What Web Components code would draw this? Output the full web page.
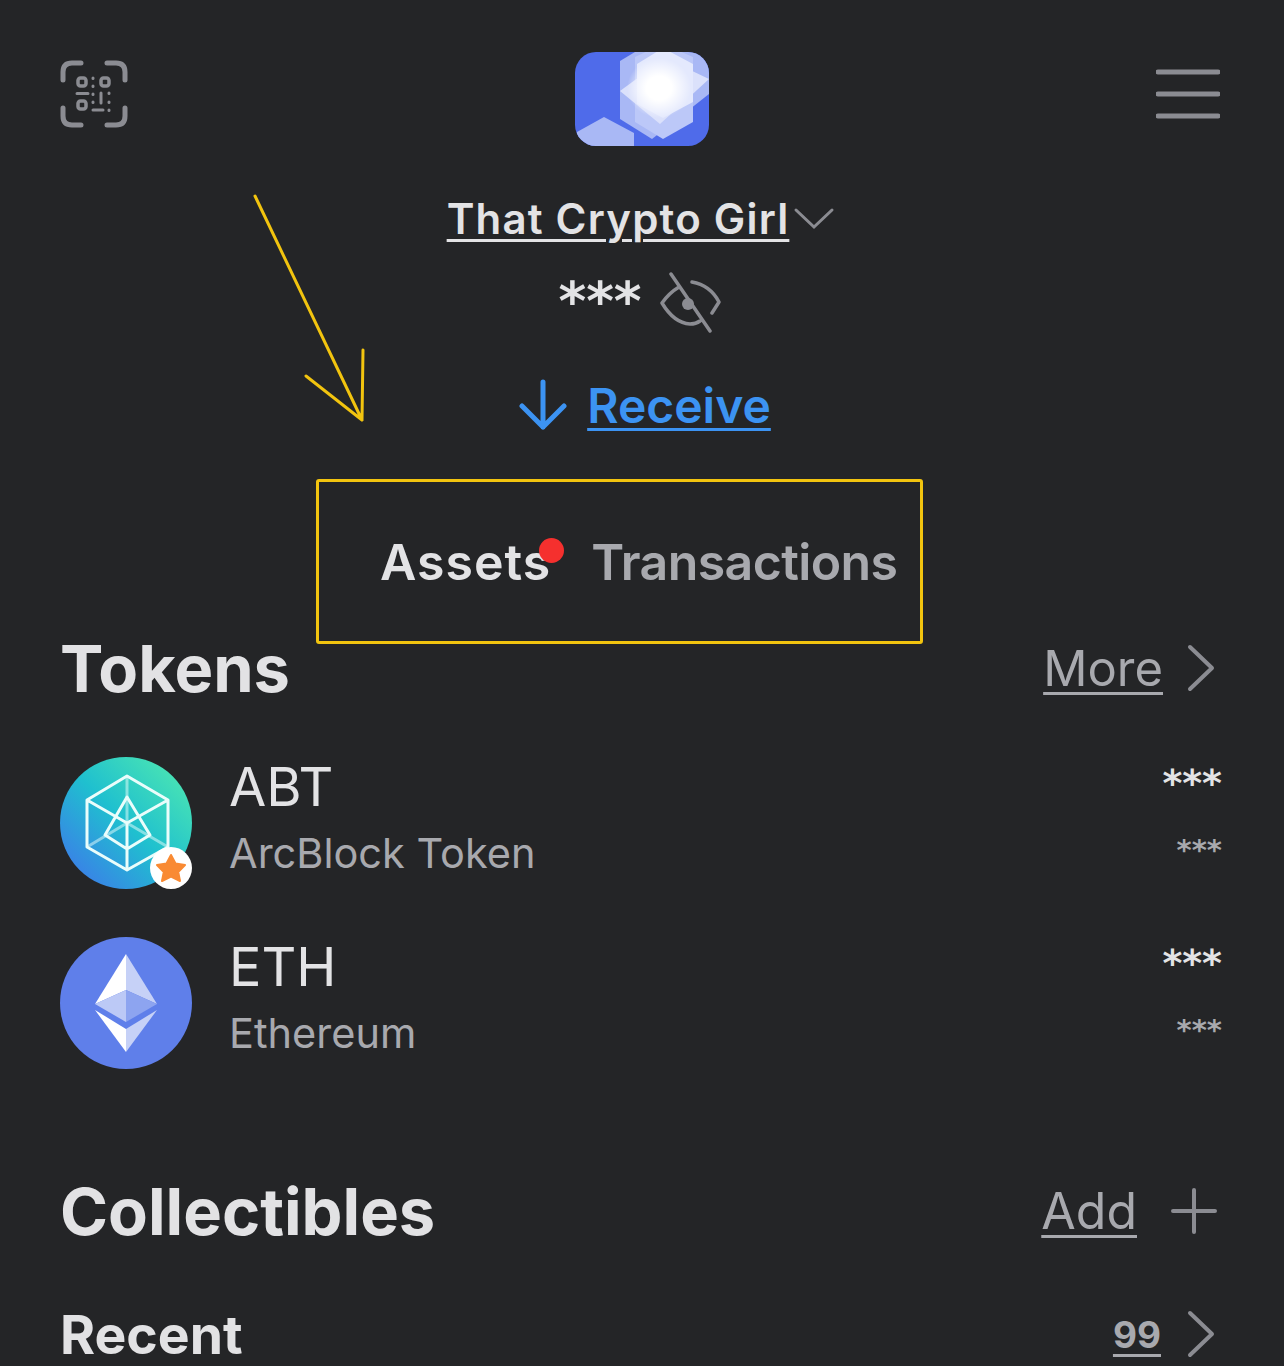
<!DOCTYPE html>
<html>
<head>
<meta charset="utf-8">
<style>
    html, body { margin: 0; padding: 0; background: #242527; }
    body { font-family: Inter, "Liberation Sans", sans-serif; height: 1366px; overflow: hidden; }
</style>
</head>
<body>
<wallet-screen>
    <top-bar></top-bar>
    <account-head name="That Crypto Girl"></account-head>
    <asset-tabs></asset-tabs>
    <section-head title="Tokens" link="More" icon="chevron" style="margin-top:-8px"></section-head>
    <token-row symbol="ABT" name="ArcBlock Token" kind="abt" style="margin-top:57px"></token-row>
    <token-row symbol="ETH" name="Ethereum" kind="eth" style="margin-top:48px"></token-row>
    <section-head title="Collectibles" link="Add" icon="plus" style="margin-top:110px"></section-head>
    <section-head title="Recent" link="99" icon="chevron" small style="margin-top:59px"></section-head>
</wallet-screen>
<script>
class WalletScreen extends HTMLElement {
    constructor() {
        super();
        this.attachShadow({ mode: 'open' });
        this.shadowRoot.innerHTML = `
            <style>
                :host { display: block; position: relative; height: 1366px; padding: 52px 60px 0; box-sizing: border-box; }
                svg { position: absolute; left: 0; top: 0; pointer-events: none; }
            </style>
            <slot></slot>
            <svg width="400" height="440" fill="none" stroke="#f2c40f" stroke-width="3" stroke-linecap="round" stroke-linejoin="round">
                <path d="M255 196L362 420M306 376L362 420L363 350"/>
            </svg>
        `;
    }
}

class TopBar extends HTMLElement {
    constructor() {
        super();
        this.attachShadow({ mode: 'open' });
        this.shadowRoot.innerHTML = `
            <style>
                :host { display: flex; justify-content: space-between; align-items: flex-start; height: 94px; margin-right: 4px; }
                svg { display: block; }
            </style>
            <svg width="68" height="68" viewBox="0 0 68 68" fill="none" stroke="#8b8c92" stroke-width="5" stroke-linecap="round" style="margin-top:8px">
                <path d="M21 3H12Q3 3 3 12V20M47 3H56Q65 3 65 12V20M3 48V56Q3 65 12 65H21M65 48V56Q65 65 56 65H47"/>
                <rect x="18" y="18" width="8" height="8" rx="2.5" stroke-width="3.5"/>
                <rect x="41" y="18" width="8" height="8" rx="2.5" stroke-width="3.5"/>
                <rect x="18" y="41" width="8" height="8" rx="2.5" stroke-width="3.5"/>
                <path stroke-width="3" d="M17 33.500H28M33 18V18.500M33 26V26.500M33 34V34.500M33 42V42.500M33 50H43M41 33V43M49 33V33.500M49 42V42.500M49 50V50.500"/>
            </svg>
            <svg width="134" height="94" viewBox="0 0 134 94">
                <defs>
                    <clipPath id="c"><rect width="134" height="94" rx="21"/></clipPath>
                    <radialGradient id="w"><stop offset="0.4" stop-color="#fff"/><stop offset="1" stop-color="#fff" stop-opacity="0"/></radialGradient>
                </defs>
                <g clip-path="url(#c)">
                    <rect width="134" height="94" fill="#4f6bea"/>
                    <path d="M2 80L29 65L59 81V94H0Z" fill="#a9b8f5"/>
                    <path d="M45 9L60 0H134V42L77 87L45 67Z" fill="#a9b8f5"/>
                    <path d="M60 5L88 -8L118 5V70L88 87L60 70Z" fill="#bcc8f8"/>
                    <path d="M45 39L90 6L134 27L85 72Z" fill="#dbe1fb"/>
                    <path d="M88 -4L118 12V50L88 66L62 52V12Z" fill="#e4e9fd"/>
                    <ellipse cx="84" cy="36" rx="32" ry="30" fill="url(#w)"/>
                </g>
            </svg>
            <svg width="64" height="50" viewBox="0 0 64 50" stroke="#8b8c92" stroke-width="5" stroke-linecap="round" style="margin-top:17px">
                <path d="M2 3H62M2 25H62M2 47H62"/>
            </svg>
        `;
    }
}

class AccountHead extends HTMLElement {
    constructor() {
        super();
        this.attachShadow({ mode: 'open' });
        const name = this.getAttribute('name');
        this.shadowRoot.innerHTML = `
            <style>
                :host { display: flex; flex-direction: column; align-items: center; color: #e3e3e5; }
                .name { display: flex; align-items: center; height: 50px; margin: 47px 0 0 -2px; }
                .name u { font-size: 42px; font-weight: 600; letter-spacing: 1.2px; text-underline-offset: 5px; text-decoration-thickness: 3px; }
                .hidden { display: flex; align-items: center; gap: 18px; height: 64px; margin: 28px 0 0 -4px; }
                .hidden b { font: 700 53px "DejaVu Sans", sans-serif; line-height: 44px; margin-top: -2px; }
                .receive { display: flex; align-items: center; gap: 20px; margin-top: 38px; color: #3c93f2; height: 64px; margin-left: 6px; }
                .receive u { font-size: 48px; font-weight: 600; text-underline-offset: 5px; text-decoration-thickness: 3px; }
                svg { display: block; }
            </style>
            <div class="name"><u>${name}</u>
                <svg width="42" height="24" viewBox="0 0 42 24" fill="none" stroke="#8b8c92" stroke-width="3" stroke-linecap="round" style="margin-left:4px">
                    <path d="M3 4L21 21L39 4"/>
                </svg>
            </div>
            <div class="hidden"><b>***</b>
                <svg width="62" height="64" viewBox="0 0 62 64" fill="none" stroke="#8b8c92" stroke-width="3.500" stroke-linecap="round" stroke-linejoin="round">
                    <path d="M11 3L50 60M32 11Q50 14 59 31L52 42M19 16Q9 22 2 32Q14 52 30 53Q36 53 40 50"/>
                    <circle cx="28" cy="33" r="6" fill="#8b8c92" stroke="none"/>
                </svg>
            </div>
            <div class="receive">
                <svg width="48" height="52" viewBox="0 0 48 52" fill="none" stroke="#3c93f2" stroke-width="5" stroke-linecap="round" stroke-linejoin="round">
                    <path d="M24 3V48M3 27L24 48L45 27"/>
                </svg>
                <u>Receive</u>
            </div>
        `;
    }
}

class AssetTabs extends HTMLElement {
    constructor() {
        super();
        this.attachShadow({ mode: 'open' });
        this.shadowRoot.innerHTML = `
            <style>
                :host { display: block; width: 607px; height: 165px; box-sizing: border-box; margin: 42px 0 0 256px; border: 3px solid #f2c40f; border-radius: 3px; position: relative; }
                .tabs { display: flex; align-items: center; height: 100%; padding-left: 61px; gap: 40px; font-size: 50px; font-weight: 600; color: #e3e3e5; box-sizing: border-box; }
                .tab { position: relative; letter-spacing: 1px; }
                .other { color: #a8a9ae; letter-spacing: -0.6px; }
                .dot { position: absolute; right: -13px; top: 6px; width: 25px; height: 25px; border-radius: 50%; background: #f5302e; }
            </style>
            <div class="tabs">
                <span class="tab">Assets<i class="dot"></i></span>
                <span class="other">Transactions</span>
            </div>
        `;
    }
}

class SectionHead extends HTMLElement {
    constructor() {
        super();
        this.attachShadow({ mode: 'open' });
        const title = this.getAttribute('title');
        const link = this.getAttribute('link');
        const plus = this.getAttribute('icon') === 'plus';
        const small = this.hasAttribute('small');
        const icon = plus
            ? '<path d="M24 3V45M3 24H45"/>'
            : '<path d="M4 3L26 24L4 45"/>';
        this.shadowRoot.innerHTML = `
            <style>
                :host { display: flex; justify-content: space-between; align-items: center; height: 64px; color: #e2e2e4; }
                :host([small]) .t { font-size: 53.5px; }
                :host([small]) u { font-weight: 700; font-size: 37px; }
                .t { font-size: 65px; font-weight: 700; }
                .l { display: flex; align-items: center; gap: ${plus ? 33 : small ? 25 : 23}px; color: #a8a9ae; font-size: ${plus ? 50 : 49}px; margin-right: ${plus ? 6 : 8}px; }
                u { text-underline-offset: 6px; text-decoration-thickness: 3px; }
                svg { display: block; }
            </style>
            <span class="t">${title}</span>
            <span class="l"><u>${link}</u>
                <svg width="${plus ? 48 : 30}" height="48" viewBox="0 0 ${plus ? 48 : 30} 48" fill="none" stroke="#8b8c92" stroke-width="4" stroke-linecap="round" stroke-linejoin="round">${icon}</svg>
            </span>
        `;
    }
}

class TokenRow extends HTMLElement {
    constructor() {
        super();
        this.attachShadow({ mode: 'open' });
        const kind = this.getAttribute('kind');
        this.shadowRoot.innerHTML = `
            <style>
                :host { display: flex; align-items: center; height: 132px; }
                .logo { width: 132px; height: 132px; flex: none; position: relative; }
                .logo svg { display: block; }
                .star { position: absolute; right: 0; bottom: 0; }
                .txt { flex: 1; margin-left: 37px; display: flex; flex-direction: column; margin-top: -7px; }
                .sym { font-size: 54px; color: #e3e3e5; line-height: 62px; }
                .sub { font-size: 41.5px; color: #a8a9ae; line-height: 62px; margin-top: 4px; }
                .val { display: flex; flex-direction: column; align-items: flex-end; font-family: "DejaVu Sans", sans-serif; color: #e3e3e5; margin: -14px 2px 0 0; }
                .val b { font-size: 38px; font-weight: 700; line-height: 32px; }
                .val span { font-size: 29px; font-weight: 700; color: #a8a9ae; line-height: 30px; margin-top: 36px; }
            </style>
            <div class="logo">${kind === 'abt' ? this.abtLogo() : this.ethLogo()}</div>
            <div class="txt">
                <span class="sym">${this.getAttribute('symbol')}</span>
                <span class="sub">${this.getAttribute('name')}</span>
            </div>
            <div class="val"><b>***</b><span>***</span></div>
        `;
    }

    abtLogo() {
        return `
            <svg width="132" height="132" viewBox="0 0 132 132">
                <defs><linearGradient id="g" x1="0" y1="1" x2="1" y2="0">
                    <stop offset="0.1" stop-color="#3b7ee8"/><stop offset="0.5" stop-color="#1fc0cf"/><stop offset="0.95" stop-color="#4fe9b0"/>
                </linearGradient></defs>
                <circle cx="66" cy="66" r="66" fill="url(#g)"/>
                <g fill="none" stroke="#eafdfb" stroke-width="3" stroke-linejoin="round">
                    <path d="M67 19L108 43V90L67 113L27 90V43ZM27 43L67 66L108 43M67 66V113M67 40L45 78L67 92L90 78Z"/>
                    <path stroke-opacity="0.5" d="M67 19V66L27 90M67 66L108 90"/>
                </g>
            </svg>
            <svg class="star" width="42" height="42" viewBox="0 0 42 42">
                <circle cx="21" cy="21" r="21" fill="#fff"/>
                <path d="M21 8L25.500 16.500L35 18L28.200 25L30 34L21 29.500L12 34L13.800 25L7 18L16.500 16.500Z" fill="#f98a33" stroke="#f98a33" stroke-width="2" stroke-linejoin="round"/>
            </svg>
        `;
    }

    ethLogo() {
        return `
            <svg width="132" height="132" viewBox="0 0 132 132">
                <circle cx="66" cy="66" r="66" fill="#5f7fea"/>
                <path d="M66 17L35 67L66 53Z" fill="#fff"/>
                <path d="M66 17L97 67L66 53Z" fill="#c6d1f7"/>
                <path d="M66 53L35 67L66 85Z" fill="#bcc9f6"/>
                <path d="M66 53L97 67L66 85Z" fill="#8da4f0"/>
                <path d="M35 73L66 92V115Z" fill="#fff"/>
                <path d="M97 73L66 92V115Z" fill="#c6d1f7"/>
            </svg>
        `;
    }
}

customElements.define('wallet-screen', WalletScreen);
customElements.define('top-bar', TopBar);
customElements.define('account-head', AccountHead);
customElements.define('asset-tabs', AssetTabs);
customElements.define('section-head', SectionHead);
customElements.define('token-row', TokenRow);
</script>
</body>
</html>
